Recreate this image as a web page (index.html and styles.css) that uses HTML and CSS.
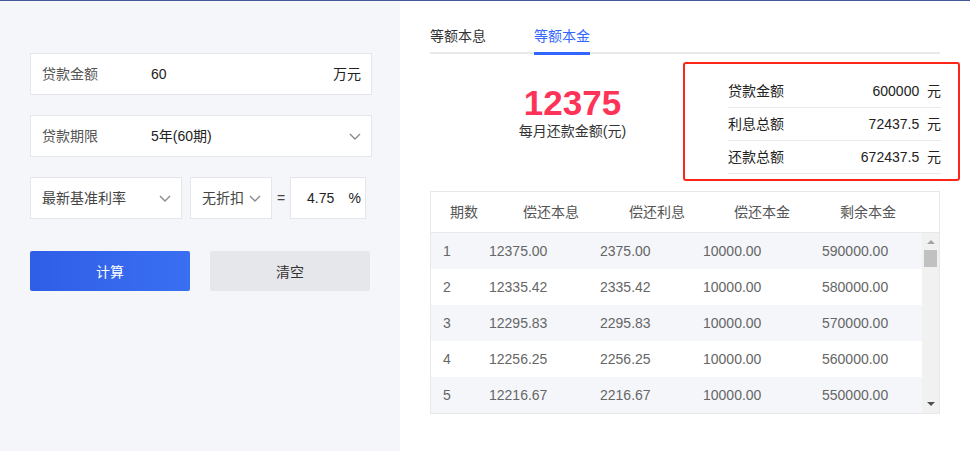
FILE: index.html
```html
<!DOCTYPE html>
<html lang="zh-CN">
<head>
<meta charset="utf-8">
<title>房贷计算器</title>
<link rel="stylesheet" href="styles.css">
</head>
<body>
<div class="topline"></div>
<div class="page">
  <aside class="form">
    <div class="field">
      <span class="label">贷款金额</span><span class="value">60</span><span class="unit">万元</span>
    </div>
    <div class="field">
      <span class="label">贷款期限</span><span class="value">5年(60期)</span>
      <svg class="chev" width="12" height="7" viewBox="0 0 12 7"><path d="M1 1L6 6L11 1" fill="none" stroke="#8a8a8a" stroke-width="1.4"/></svg>
    </div>
    <div class="rate-row">
      <div class="box box-rate"><span>最新基准利率</span><svg class="chev" width="12" height="7" viewBox="0 0 12 7"><path d="M1 1L6 6L11 1" fill="none" stroke="#8a8a8a" stroke-width="1.4"/></svg></div>
      <div class="box box-disc"><span>无折扣</span><svg class="chev" width="12" height="7" viewBox="0 0 12 7"><path d="M1 1L6 6L11 1" fill="none" stroke="#8a8a8a" stroke-width="1.4"/></svg></div>
      <span class="eq">=</span>
      <div class="box box-num"><span>4.75</span><span>%</span></div>
    </div>
    <div class="btns">
      <button class="btn btn-primary">计算</button>
      <button class="btn btn-clear">清空</button>
    </div>
  </aside>

  <main class="result">
    <nav class="tabs">
      <span class="tab">等额本息</span>
      <span class="tab active">等额本金</span>
    </nav>
    <section class="summary">
      <div class="monthly">
        <div class="big">12375</div>
        <div class="sub">每月还款金额(元)</div>
      </div>
      <div class="totals">
        <div class="trow"><span>贷款金额</span><span>600000&nbsp; 元</span></div>
        <div class="trow"><span>利息总额</span><span>72437.5&nbsp; 元</span></div>
        <div class="trow"><span>还款总额</span><span>672437.5&nbsp; 元</span></div>
      </div>
    </section>
    <section class="table">
      <div class="thead">
        <span>期数</span><span>偿还本息</span><span>偿还利息</span><span>偿还本金</span><span>剩余本金</span>
      </div>
      <div class="tbody">
        <div class="rows">
          <div class="row odd"><span>1</span><span>12375.00</span><span>2375.00</span><span>10000.00</span><span>590000.00</span></div>
          <div class="row"><span>2</span><span>12335.42</span><span>2335.42</span><span>10000.00</span><span>580000.00</span></div>
          <div class="row odd"><span>3</span><span>12295.83</span><span>2295.83</span><span>10000.00</span><span>570000.00</span></div>
          <div class="row"><span>4</span><span>12256.25</span><span>2256.25</span><span>10000.00</span><span>560000.00</span></div>
          <div class="row odd"><span>5</span><span>12216.67</span><span>2216.67</span><span>10000.00</span><span>550000.00</span></div>
        </div>
        <div class="scrollbar">
          <span class="arrow-up"></span>
          <span class="thumb"></span>
          <span class="spacer"></span>
          <span class="arrow-down"></span>
        </div>
      </div>
    </section>
  </main>
</div>
</body>
</html>
```
FILE: styles.css
```css
* { box-sizing: border-box; margin: 0; padding: 0; }
html, body { height: 100%; }
body {
  font-family: "Liberation Sans", "Noto Sans CJK SC", sans-serif;
  font-size: 14px;
  color: #333;
  background: #fff;
  overflow: hidden;
}
.topline { height: 1px; background: #45599a; }
.page { display: flex; height: 450px; }

/* left form */
.form {
  width: 400px;
  background: #f5f6fa;
  padding: 52px 0 0 30px;
  display: flex;
  flex-direction: column;
}
.field {
  width: 342px;
  height: 42px;
  background: #fff;
  border: 1px solid #e4e6eb;
  display: flex;
  align-items: center;
  padding: 0 10px 0 11px;
  line-height: 20px;
  margin-bottom: 20px;
}
.label { width: 109px; color: #555; }
.value { flex: 1; color: #222; }
.unit { color: #222; }
.chev { display: block; flex: none; }

.rate-row { display: flex; align-items: center; height: 42px; margin-bottom: 32px; }
.box {
  height: 42px;
  background: #fff;
  border: 1px solid #e4e6eb;
  display: flex;
  align-items: center;
  justify-content: space-between;
  line-height: 20px;
  color: #444;
}
.box-rate { width: 152px; padding: 0 10px 0 11px; margin-right: 8px; }
.box-disc { width: 82px; padding: 0 10px 0 11px; }
.eq { width: 8px; margin: 0 5px; color: #444; }
.box-num { width: 76px; padding: 0 4px 0 16px; color: #222; }

.btns { display: flex; gap: 20px; }
.btn {
  width: 160px;
  height: 40px;
  border: none;
  border-radius: 2px;
  font-family: inherit;
  font-size: 14px;
}
.btn-primary { background: linear-gradient(90deg, #2f5ee6, #3a6ff2); color: #fff; }
.btn-clear { background: #e6e7eb; color: #333; }

/* right */
.result { flex: 1; padding-left: 30px; }
.tabs {
  width: 510px;
  display: flex;
  border-bottom: 2px solid #e9e9ec;
  line-height: 20px;
}
.tab {
  padding: 25px 0 6px;
  border-bottom: 2px solid transparent;
  margin-bottom: -2px;
  color: #333;
}
.tab:first-child { width: 104px; }
.tab.active {
  color: #3366ff;
  border-bottom: 3px solid #3366ff;
  margin-bottom: -3px;
}

.summary { display: flex; margin-top: 8px; }
.monthly { width: 253px; padding: 23px 0 0 32px; text-align: center; }
.big {
  font-size: 35px;
  line-height: 35px;
  font-weight: bold;
  color: #fe3358;
}
.sub { line-height: 20px; margin-top: 1px; color: #333; }

.totals {
  width: 277px;
  height: 119px;
  border: 2px solid #fd2418;
  border-radius: 3px;
  padding: 11px 17px 5px 43px;
}
.trow {
  height: 33px;
  border-bottom: 1px solid #ebebeb;
  display: flex;
  align-items: center;
  justify-content: space-between;
  color: #222;
  line-height: 20px;
}

.table {
  width: 510px;
  margin-top: 10px;
  border: 1px solid #e8e8eb;
}
.thead {
  height: 41px;
  border-bottom: 1px solid #e8e8eb;
  display: grid;
  grid-template-columns: 73px 106px 105px 106px 1fr;
  align-items: center;
  padding-left: 19px;
  color: #555;
  line-height: 20px;
}
.tbody { display: flex; }
.rows { flex: 1; }
.row {
  height: 36px;
  display: grid;
  grid-template-columns: 46px 111px 103px 119px 1fr;
  align-items: center;
  padding-left: 12px;
  color: #666;
  line-height: 20px;
}
.row.odd { background: #f5f6fa; }

.scrollbar {
  width: 17px;
  background: #f1f1f1;
  display: flex;
  flex-direction: column;
  align-items: center;
  padding: 7px 0 7px;
}
.arrow-up {
  width: 0; height: 0;
  border-left: 4px solid transparent;
  border-right: 4px solid transparent;
  border-bottom: 4px solid #a3a3a3;
}
.thumb {
  width: 13px;
  height: 17px;
  background: #c1c1c1;
  margin-top: 6px;
}
.spacer { flex: 1; }
.arrow-down {
  width: 0; height: 0;
  border-left: 4px solid transparent;
  border-right: 4px solid transparent;
  border-top: 4px solid #505050;
}
```
